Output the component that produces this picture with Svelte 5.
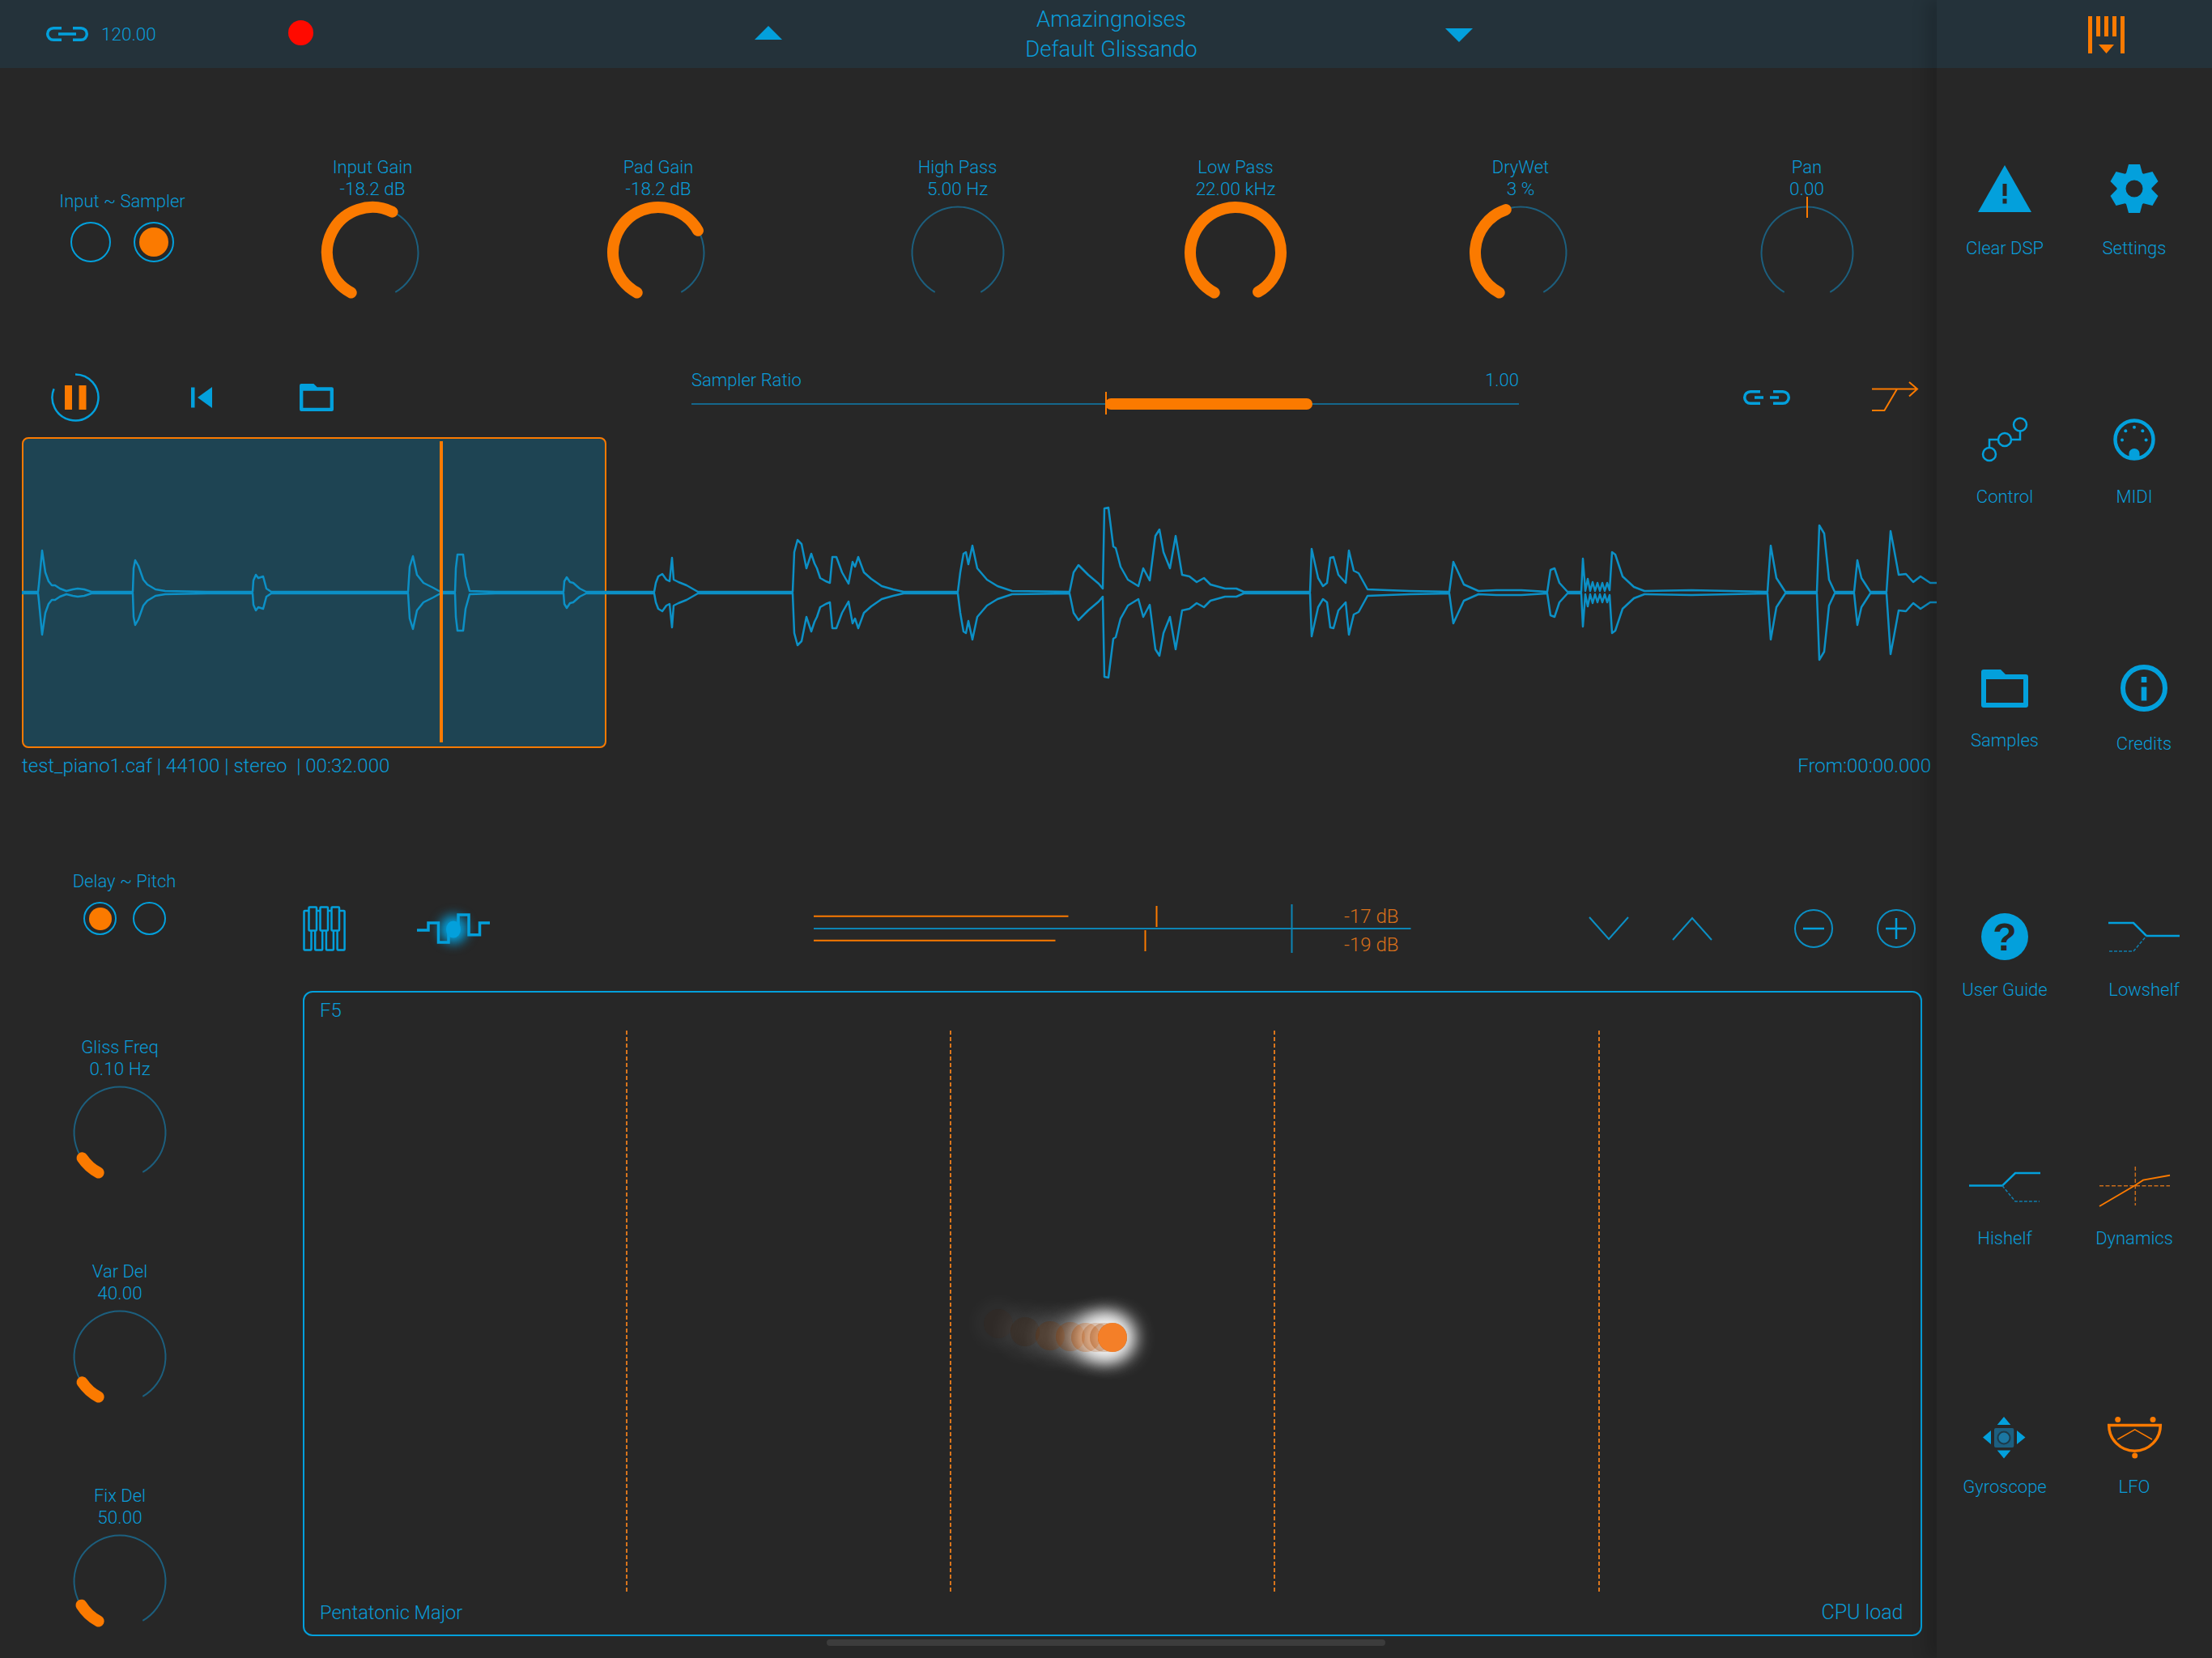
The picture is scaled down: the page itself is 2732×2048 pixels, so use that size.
<script lang="ts">
	const topKnobs = [
		{ label: 'Input Gain', value: '-18.2 dB', end: 26 },
		{ label: 'Pad Gain', value: '-18.2 dB', end: 61 },
		{ label: 'High Pass', value: '5.00 Hz', end: null },
		{ label: 'Low Pass', value: '22.00 kHz', end: 150 },
		{ label: 'DryWet', value: '3 %', end: -19 },
		{ label: 'Pan', value: '0.00', end: null, tick: true }
	];

	const sideKnobs = [
		{ label: 'Gliss Freq', value: '0.10 Hz', end: -124 },
		{ label: 'Var Del', value: '40.00', end: -124 },
		{ label: 'Fix Del', value: '50.00', end: -122 }
	];

	// envelope of the sample, traced by hand: [x, amplitude]
	const wave = [
		[27, 1], [47, 1], [48, 10], [52, 52], [56, 25], [60, 14], [64, 9], [68, 9], [74, 5], [82, 2], [90, 4], [96, 5], [104, 4], [113, 1],
		[164, 1], [165, 30], [167, 40], [171, 33], [177, 16], [182, 10], [192, 4], [204, 2], [261, 1],
		[312, 1], [313, 15], [316, 22], [319, 18], [325, 20], [329, 5], [335, 1],
		[504, 1], [506, 32], [510, 45], [515, 22], [523, 12], [535, 6], [544, 1],
		[562, 1], [563, 30], [565, 47], [572, 47], [575, 20], [580, 2], [612, 1],
		[696, 1], [697, 14], [700, 19], [704, 13], [708, 12], [716, 5], [724, 1],
		[808, 1], [810, 12], [813, 20], [818, 23], [823, 16], [827, 14], [830, 43], [832, 16], [838, 13], [848, 9], [862, 1],
		[979, 1], [981, 50], [985, 65], [990, 60], [996, 30], [1002, 48], [1006, 36], [1009, 30], [1013, 18], [1020, 14], [1025, 12],
		[1028, 44], [1033, 44], [1040, 25], [1048, 11], [1053, 38], [1056, 32], [1060, 44], [1067, 25], [1076, 17], [1089, 8], [1103, 4], [1116, 1],
		[1183, 1], [1186, 25], [1190, 48], [1193, 50], [1196, 35], [1201, 58], [1207, 30], [1219, 16], [1232, 8], [1250, 2], [1321, 1],
		[1326, 25], [1332, 34], [1344, 22], [1357, 11], [1362, 5], [1364, 104], [1369, 105], [1375, 57], [1378, 55], [1384, 32], [1393, 16], [1406, 8],
		[1412, 30], [1420, 15], [1427, 70], [1432, 78], [1437, 50], [1445, 30], [1452, 70], [1460, 22], [1469, 20], [1478, 13], [1487, 18],
		[1495, 10], [1513, 5], [1527, 5], [1536, 1],
		[1618, 1], [1620, 54], [1628, 18], [1634, 8], [1639, 12], [1643, 43], [1647, 44], [1653, 22], [1662, 12], [1666, 52], [1672, 27], [1678, 24], [1689, 4],
		[1714, 3], [1741, 2], [1790, 1],
		[1795, 38], [1808, 10], [1826, 2], [1848, 3], [1879, 3], [1911, 1],
		[1915, 28], [1920, 30], [1926, 12], [1936, 1], [1953, 1], [1955, 42], [1958, 2], [1961, 17], [1964, 2], [1967, 13], [1970, 2], [1973, 12], [1976, 2], [1979, 12], [1982, 2], [1985, 12], [1988, 3],
		[1991, 50], [1995, 47], [2004, 20], [2018, 7], [2031, 2], [2089, 3], [2183, 1],
		[2187, 58], [2194, 18], [2205, 1], [2244, 1],
		[2247, 83], [2253, 73], [2259, 16], [2266, 1], [2290, 1],
		[2294, 40], [2299, 18], [2310, 1], [2330, 1],
		[2335, 76], [2339, 55], [2345, 22], [2354, 23], [2363, 13], [2372, 20], [2384, 12], [2392, 12]
	];
	const waveMid = 192;
	const waveTop = wave.map(([x, a]) => `${x},${waveMid - a}`).join(' ');
	const waveBottom = wave.map(([x, a]) => `${x},${waveMid + a}`).join(' ');

	// ball on the pad with its fading trail, oldest first
	const trail = [
		{ x: 857, y: 409, a: 0.04, glow: 0.04 },
		{ x: 890, y: 419, a: 0.07, glow: 0.07 },
		{ x: 921, y: 424, a: 0.14, glow: 0.11 },
		{ x: 946, y: 425, a: 0.2, glow: 0.16 },
		{ x: 965, y: 426, a: 0.28, glow: 0.3 },
		{ x: 978, y: 426, a: 0.2, glow: 0.5 },
		{ x: 988, y: 426, a: 0.2, glow: 0.7 },
		{ x: 998, y: 426, a: 1, glow: 0.85 }
	];

	function polar(cx: number, cy: number, r: number, deg: number) {
		const rad = (deg * Math.PI) / 180;
		return [cx + r * Math.sin(rad), cy - r * Math.cos(rad)];
	}

	// angles run clockwise from 12 o'clock
	function arc(cx: number, cy: number, r: number, from: number, to: number) {
		const [x0, y0] = polar(cx, cy, r, from);
		const [x1, y1] = polar(cx, cy, r, to);
		const large = to - from > 180 ? 1 : 0;
		return `M${x0.toFixed(2)} ${y0.toFixed(2)}A${r} ${r} 0 ${large} 1 ${x1.toFixed(2)} ${y1.toFixed(2)}`;
	}

	const gearTeeth = [0, 60, 120, 180, 240, 300];
</script>

{#snippet knob(k)}
	<div class="knob">
		<div class="caption">{k.label}</div>
		<div class="caption value">{k.value}</div>
		<svg class="dial" width="140" height="120" viewBox="0 0 140 120">
			<path class="dial-track" d={arc(70, 62, 56.5, -150, 150)} />
			{#if k.end !== null}
				<path class="dial-value" d={arc(70, 62, 56, -152, k.end)} />
			{/if}
			{#if k.tick}
				<line class="dial-tick" x1="70" y1="-7" x2="70" y2="19" />
			{/if}
		</svg>
	</div>
{/snippet}

{#snippet radio(on, size)}
	<span class="radio" class:small={size === 'small'}>
		{#if on}<span class="radio-dot"></span>{/if}
	</span>
{/snippet}

{#snippet folderIcon(w, h)}
	<svg width={w} height={h} viewBox="0 0 58 47">
		<path
			class="fill-blue"
			fill-rule="evenodd"
			d="M0 3a3 3 0 0 1 3-3H24L30 6H55a3 3 0 0 1 3 3V44a3 3 0 0 1-3 3H3a3 3 0 0 1-3-3ZM6 12V41H52V12Z"
		/>
	</svg>
{/snippet}

<div class="app">
	<div class="main">
		<header class="topbar">
			<svg class="bar-link" width="54" height="18" viewBox="0 0 54 18">
				<path class="line-blue thick" d="M20 1.7H10a7.3 7.3 0 0 0 0 14.6H20M34 1.7H44a7.3 7.3 0 0 1 0 14.6H34M16 9H38" />
			</svg>
			<span class="tempo">120.00</span>
			<span class="rec"></span>
			<svg class="preset-up" width="34" height="17" viewBox="0 0 34 17"><path class="fill-blue" d="M17 0L34 17H0Z" /></svg>
			<div class="preset">
				<div>Amazingnoises</div>
				<div>Default Glissando</div>
			</div>
			<svg class="preset-down" width="34" height="17" viewBox="0 0 34 17"><path class="fill-blue" d="M0 0H34L17 17Z" /></svg>
		</header>

		<section class="knob-row">
			<div class="input-select">
				<div class="caption">Input ~ Sampler</div>
				<div class="radios">
					{@render radio(false, 'large')}
					{@render radio(true, 'large')}
				</div>
			</div>
			{#each topKnobs as k}
				{@render knob(k)}
			{/each}
		</section>

		<section class="transport">
			<svg class="pause" width="60" height="60" viewBox="0 0 60 60">
				<path class="line-blue" d={arc(30, 30, 28.5, 0, 292)} />
				<rect class="fill-orange" x="17" y="15" width="9" height="30" />
				<rect class="fill-orange" x="34.5" y="15" width="9" height="30" />
			</svg>
			<svg class="rewind" width="26" height="26" viewBox="0 0 26 26">
				<rect class="fill-blue" x="0" y="0.5" width="4.5" height="25" />
				<path class="fill-blue" d="M8 13L26 0V26Z" />
			</svg>
			<span class="open-file">{@render folderIcon(42, 34)}</span>
			<div class="ratio">
				<div class="ratio-text"><span>Sampler Ratio</span><span>1.00</span></div>
				<div class="ratio-track">
					<span class="ratio-fill"></span>
					<span class="ratio-tick"></span>
				</div>
			</div>
			<svg class="chain" width="60" height="18" viewBox="0 0 60 18">
				<path class="line-blue thick" d="M22 1.7H10a7.3 7.3 0 0 0 0 14.6H22M38 1.7H50a7.3 7.3 0 0 1 0 14.6H38M15 9H26M34 9H45" />
			</svg>
			<svg class="route" width="56" height="36" viewBox="0 0 56 36">
				<path class="line-orange" d="M0 8.6H56M46 0L56 8.6L46 17.5M31 8.6L15.4 35H0" />
			</svg>
		</section>

		<section class="sample">
			<div class="selection"><span class="playhead"></span></div>
			<svg class="wave" width="2392" height="384" viewBox="0 0 2392 384">
				<polyline points={waveTop} />
				<polyline points={waveBottom} />
			</svg>
		</section>

		<div class="sample-info">
			<span>test_piano1.caf | 44100 | stereo&nbsp; | 00:32.000</span>
			<span>From:00:00.000</span>
		</div>

		<section class="lower">
			<aside class="lower-left">
				<div class="delay-select">
					<div class="caption">Delay ~ Pitch</div>
					<div class="radios">
						{@render radio(true, 'small')}
						{@render radio(false, 'small')}
					</div>
				</div>
				{#each sideKnobs as k}
					{@render knob(k)}
				{/each}
			</aside>

			<div class="lower-right">
				<div class="pad-tools">
					<svg class="piano" width="53" height="56" viewBox="0 0 53 56">
						{#each [0, 1, 2, 3] as i}
							<rect class="key" x={1.5 + i * 13.7} y="6" width="9" height="48.5" rx="1" />
						{/each}
						{#each [0, 1, 2] as i}
							<rect class="key" x={7.5 + i * 14} y="1.5" width="9.5" height="29" rx="1" />
						{/each}
					</svg>
					<svg class="gliss" width="90" height="36" viewBox="0 0 90 36">
						<circle class="gliss-glow" cx="45" cy="19" r="17" />
						<path class="line-blue thick" d="M0 20H14V11H26.5V35H39V20H51V1H64V25.7H77.5V11H90" />
						<ellipse class="fill-blue" cx="45" cy="19" rx="9" ry="10.5" />
					</svg>
					<svg class="meter" width="738" height="60" viewBox="0 0 738 60">
						<path class="line-orange" d="M0 14.7H314.5M0 44.7H298.5M423.5 2V28M409.5 32V58" />
						<path class="line-meter" d="M0 30H737.5M590.5 0V60" />
						<text x="722.5" y="22.5" text-anchor="end">-17 dB</text>
						<text x="722.5" y="57.5" text-anchor="end">-19 dB</text>
					</svg>
					<svg class="chevron first" width="48" height="28" viewBox="0 0 48 28"><path class="line-thin" d="M0 0L24 27L48 0" /></svg>
					<svg class="chevron" width="48" height="28" viewBox="0 0 48 28"><path class="line-thin" d="M0 28L24 1L48 28" /></svg>
					<svg class="zoom-out" width="48" height="48" viewBox="0 0 48 48">
						<circle class="line-thin" cx="24" cy="24" r="23" />
						<path class="line-blue" d="M11 24H37" />
					</svg>
					<svg class="zoom-in" width="48" height="48" viewBox="0 0 48 48">
						<circle class="line-thin" cx="24" cy="24" r="23" />
						<path class="line-blue" d="M11 24H37M24 11V37" />
					</svg>
				</div>

				<div class="pad">
					<div>F5</div>
					<div class="pad-foot"><span class="scale-name">Pentatonic Major</span><span>CPU load</span></div>
					{#each [397.5, 797.5, 1197.5, 1598] as x}
						<span class="grid-line" style="left: {x}px"></span>
					{/each}
					{#each trail as t}
						<span class="ball-glow" style="left: {t.x}px; top: {t.y}px; box-shadow: 0 0 22px 11px rgba(255, 255, 255, {t.glow})"></span>
					{/each}
					{#each trail as t}
						<span class="ball" style="left: {t.x}px; top: {t.y}px; opacity: {t.a}"></span>
					{/each}
				</div>
			</div>
		</section>
	</div>

	<nav class="sidebar">
		<div class="sidebar-top">
			<svg width="45" height="46" viewBox="0 0 45 46">
				<path class="fill-orange" d="M0 0H5V46H0ZM10 0H15V25H10ZM20 0H25V25H20ZM30 0H35V25H30ZM40 0H45V46H40ZM13 35H32L22.5 46Z" />
			</svg>
		</div>
		<div class="tools">
			<div class="tool r1">
				<span class="tool-icon">
					<svg width="66" height="58" viewBox="0 0 66 58">
						<path class="fill-blue" d="M33 0L66 58H0Z" />
						<rect class="cut" x="30.5" y="23" width="5" height="15" />
						<rect class="cut" x="30.5" y="41.5" width="5" height="6" />
					</svg>
				</span>
				<span class="tool-label">Clear DSP</span>
			</div>
			<div class="tool r1">
				<span class="tool-icon">
					<svg width="58" height="60" viewBox="-29 -30 58 60">
						<circle class="gear-ring" r="16" />
						{#each gearTeeth as deg}
							<path class="fill-blue" d="M-10 -19L-7 -30H7L10 -19Z" transform="rotate({deg})" />
						{/each}
					</svg>
				</span>
				<span class="tool-label">Settings</span>
			</div>

			<div class="tool r2">
				<span class="tool-icon">
					<svg width="58" height="56" viewBox="0 0 58 56">
						<ellipse class="line-blue" cx="10" cy="46" rx="8" ry="8" />
						<ellipse class="line-blue" cx="29" cy="28" rx="8" ry="8" />
						<ellipse class="line-blue" cx="48" cy="9.5" rx="8" ry="8" />
						<path class="line-blue" d="M10 38V28H21M37 28H48V17.5" />
					</svg>
				</span>
				<span class="tool-label">Control</span>
			</div>
			<div class="tool r2">
				<span class="tool-icon">
					<svg width="52" height="52" viewBox="-26 -26 52 52">
						<circle class="midi-ring" r="23.5" />
						{#each [[-10.7, -10.7], [0, -15.3], [10.3, -10.7], [-15, 0.5], [14.6, 0.5]] as [x, y]}
							<circle class="fill-blue" cx={x} cy={y} r="2" />
						{/each}
						<path class="fill-blue" d="M-6.5 24V17a6.5 6 0 0 1 13 0V24Z" />
					</svg>
				</span>
				<span class="tool-label">MIDI</span>
			</div>

			<div class="tool r3">
				<span class="tool-icon">{@render folderIcon(58, 47)}</span>
				<span class="tool-label">Samples</span>
			</div>
			<div class="tool r3 shift credits">
				<span class="tool-icon">
					<svg width="58" height="58" viewBox="-29 -29 58 58">
						<circle class="info-ring" r="26" />
						<rect class="fill-blue" x="-3.3" y="-14" width="6.6" height="7" />
						<rect class="fill-blue" x="-3.3" y="-1.5" width="6.6" height="17" />
					</svg>
				</span>
				<span class="tool-label">Credits</span>
			</div>

			<div class="tool r4">
				<span class="tool-icon">
					<svg width="58" height="58" viewBox="-29 -29 58 58">
						<circle class="fill-blue" r="29" />
						<text class="help-mark" y="17" text-anchor="middle">?</text>
					</svg>
				</span>
				<span class="tool-label">User Guide</span>
			</div>
			<div class="tool r4 shift">
				<span class="tool-icon">
					<svg width="88" height="37" viewBox="0 0 88 37">
						<path class="line-blue" d="M0 1H31L47 17H88" />
						<path class="line-dash" d="M1 36H31L47 17" />
					</svg>
				</span>
				<span class="tool-label">Lowshelf</span>
			</div>

			<div class="tool r5">
				<span class="tool-icon">
					<svg width="88" height="37" viewBox="0 0 88 37">
						<path class="line-blue" d="M0 16.6H41L57 1H88" />
						<path class="line-dash" d="M41 16.6L57 36H87" />
					</svg>
				</span>
				<span class="tool-label">Hishelf</span>
			</div>
			<div class="tool r5">
				<span class="tool-icon">
					<svg width="87" height="50" viewBox="0 0 87 50">
						<path class="line-orange-dash" d="M44.3 0V48M0 23.7H87" />
						<path class="line-orange" d="M0 49L44.3 23L54 16.6L87 10.7" />
					</svg>
				</span>
				<span class="tool-label">Dynamics</span>
			</div>

			<div class="tool r6">
				<span class="tool-icon">
					<svg width="53" height="52" viewBox="0 0 53 52">
						<path class="fill-blue" d="M26 0L34.3 10H17.7ZM26 51.5L34.3 41.5H17.7ZM0 25.5L10 17V34ZM52.5 25.5L42 17V34Z" />
						<rect class="gyro-pad" x="14" y="14" width="24.3" height="24" rx="2" />
						<circle class="gyro-ball" cx="26" cy="26" r="7.5" />
					</svg>
				</span>
				<span class="tool-label">Gyroscope</span>
			</div>
			<div class="tool r6">
				<span class="tool-icon">
					<svg width="67" height="52" viewBox="0 0 67 52">
						<path class="line-orange heavy" d="M1.7 10.4H65.3A31.8 31.8 0 0 1 1.7 10.4Z" />
						<path class="line-orange slim" d="M12.3 28L33.7 15.8L55 28" />
						<circle class="fill-orange" cx="12.7" cy="3.5" r="3.5" />
						<circle class="fill-orange" cx="56" cy="3.5" r="3.5" />
						<circle class="fill-orange" cx="33.7" cy="48" r="3.5" />
					</svg>
				</span>
				<span class="tool-label">LFO</span>
			</div>
		</div>
	</nav>

	<span class="home-bar"></span>
</div>

<style>
	:global(body) {
		margin: 0;
		background: #272727;
	}

	.app {
		position: relative;
		display: flex;
		width: 2732px;
		height: 2048px;
		overflow: hidden;
		background: #272727;
		color: #0a9cd8;
		font-family: Roboto, 'Liberation Sans', sans-serif;
		font-weight: 300;
		font-size: 24px;
		line-height: 30px;
	}

	svg {
		display: block;
		overflow: visible;
	}

	.fill-blue {
		fill: #03a0dc;
	}

	.fill-orange {
		fill: #fb7a00;
	}

	.line-blue {
		fill: none;
		stroke: #03a0dc;
		stroke-width: 2.5;
	}

	.line-blue.thick {
		stroke-width: 3.5;
	}

	.line-thin {
		fill: none;
		stroke: #0b8fc4;
		stroke-width: 2;
	}

	.line-dash {
		fill: none;
		stroke: #0f7fae;
		stroke-width: 1.5;
		stroke-dasharray: 4 2;
	}

	.line-orange {
		fill: none;
		stroke: #fb7a00;
		stroke-width: 2;
	}

	.line-orange.heavy {
		stroke-width: 3.5;
	}

	.line-orange.slim {
		stroke-width: 1.5;
	}

	.line-orange-dash {
		fill: none;
		stroke: #c96c1b;
		stroke-width: 1.5;
		stroke-dasharray: 5 2.5;
	}

	.main {
		width: 2392px;
		flex: none;
	}

	/* top bar */
	.topbar {
		display: flex;
		align-items: center;
		height: 84px;
		padding-left: 56px;
		background: #24323a;
	}

	.tempo {
		flex: none;
		width: 67px;
		margin-left: 15px;
		font-size: 22.5px;
	}

	.rec {
		flex: none;
		width: 31px;
		height: 31px;
		margin: -3px 0 0 164px;
		border-radius: 50%;
		background: #ff0a00;
	}

	.preset-up {
		margin: -3px 0 0 545px;
	}

	.preset {
		box-sizing: border-box;
		width: 819px;
		padding-right: 6px;
		text-align: center;
		font-size: 27.5px;
		line-height: 37px;
	}

	.preset-down {
		margin-top: 3px;
	}

	/* knobs */
	.knob-row {
		display: grid;
		grid-template-columns: 302px 316px 390px 349px 338px 366px 341px;
		padding-top: 110px;
		width: 2392px;
	}

	.knob {
		display: flex;
		flex-direction: column;
		align-items: center;
	}

	.caption {
		font-size: 22px;
		line-height: 26px;
		text-align: center;
		white-space: nowrap;
	}

	.caption.value {
		font-size: 22.5px;
	}

	.dial {
		margin-top: 4px;
	}

	.dial-track {
		fill: none;
		stroke: #1c5f7e;
		stroke-width: 2;
	}

	.dial-value {
		fill: none;
		stroke: #fb7a00;
		stroke-width: 14;
		stroke-linecap: round;
	}

	.dial-tick {
		stroke: #fb7a00;
		stroke-width: 2;
	}

	.input-select {
		padding-top: 42px;
	}

	.radios {
		display: flex;
		justify-content: center;
		gap: 28px;
		margin-top: 12px;
	}

	.radio {
		box-sizing: border-box;
		display: flex;
		align-items: center;
		justify-content: center;
		width: 50px;
		height: 50px;
		border: 2.5px solid #03a0dc;
		border-radius: 50%;
	}

	.radio-dot {
		width: 36px;
		height: 36px;
		border-radius: 50%;
		background: #fb7a00;
	}

	.radio.small {
		width: 41px;
		height: 41px;
	}

	.radio.small .radio-dot {
		width: 28px;
		height: 28px;
	}

	/* transport row */
	.transport {
		display: flex;
		align-items: center;
		height: 72px;
		margin-top: 85px;
		padding-left: 63px;
	}

	.rewind {
		margin-left: 113px;
	}

	.open-file {
		margin-left: 108px;
	}

	.ratio {
		align-self: stretch;
		width: 1022px;
		margin-left: 442px;
	}

	.ratio-text {
		display: flex;
		justify-content: space-between;
		font-size: 22px;
	}

	.ratio-track {
		position: relative;
		height: 2px;
		margin-top: 13px;
		background: #15678c;
	}

	.ratio-fill {
		position: absolute;
		left: 511px;
		top: -6px;
		width: 256px;
		height: 14px;
		border-radius: 7px;
		background: #fb7a00;
	}

	.ratio-tick {
		position: absolute;
		left: 511px;
		top: -14px;
		width: 1.5px;
		height: 28px;
		background: #fb7a00;
	}

	.chain {
		margin-left: 276px;
	}

	.route {
		margin: -2px 0 0 100px;
	}

	/* waveform */
	.sample {
		position: relative;
		height: 384px;
		margin-top: 13px;
	}

	.selection {
		position: absolute;
		left: 27px;
		top: 0;
		box-sizing: border-box;
		width: 722px;
		height: 384px;
		border: 2.5px solid #fb7a00;
		border-radius: 8px;
		background: #1e4453;
	}

	.playhead {
		position: absolute;
		left: 514px;
		top: 3px;
		z-index: 1;
		width: 3.5px;
		height: 372px;
		background: #fb7a00;
	}

	.wave {
		position: relative;
	}

	.wave polyline {
		fill: none;
		stroke: #0c90c6;
		stroke-width: 2.5;
		stroke-linejoin: round;
	}

	.sample-info {
		display: flex;
		justify-content: space-between;
		margin-top: 7px;
		padding: 0 7px 0 27px;
	}

	/* lower part */
	.lower {
		display: flex;
		margin-top: 114px;
	}

	.lower-left {
		width: 296px;
		flex: none;
	}

	.delay-select .caption {
		margin: 1px 0 0 11px;
	}

	.delay-select .radios {
		gap: 20px;
		margin: 12px 0 0 12px;
	}

	.lower-left .knob {
		margin-top: 101px;
	}

	.delay-select + .knob {
		margin-top: 126px;
	}

	.lower-right {
		margin-left: 77.5px;
		width: 2000px;
	}

	.pad-tools {
		display: flex;
		align-items: center;
		height: 144px;
	}

	.piano .key {
		fill: #272727;
		stroke: #03a0dc;
		stroke-width: 2.5;
	}

	.gliss {
		margin-left: 88.5px;
	}

	.gliss-glow {
		fill: #03a0dc;
		filter: blur(7px);
	}

	.meter {
		margin-left: 399.5px;
	}

	.line-meter {
		fill: none;
		stroke: #0d85b5;
		stroke-width: 2;
	}

	.meter text {
		fill: #d9701a;
		font-size: 24px;
	}

	.chevron {
		margin-left: 55px;
	}

	.chevron.first {
		margin-left: 220px;
	}

	.zoom-out {
		margin-left: 102px;
	}

	.zoom-in {
		margin-left: 54px;
	}

	.pad {
		position: relative;
		box-sizing: border-box;
		display: flex;
		flex-direction: column;
		justify-content: space-between;
		height: 797px;
		margin-top: 5px;
		padding: 7px 21px 12px 19.5px;
		border: 2.5px solid #03a0dc;
		border-radius: 12px;
	}

	.pad-foot {
		display: flex;
		justify-content: space-between;
		font-size: 25px;
	}

	.scale-name {
		font-size: 23.6px;
	}

	.grid-line {
		position: absolute;
		top: 47px;
		width: 2px;
		height: 696px;
		background: repeating-linear-gradient(#d9751c 0 5px, transparent 5px 8px);
	}

	.ball-glow,
	.ball {
		position: absolute;
		width: 36px;
		height: 36px;
		margin: -18px 0 0 -18px;
		border-radius: 50%;
	}

	.ball {
		background: #f47f28;
	}

	/* sidebar */
	.sidebar {
		position: relative;
		z-index: 2;
		flex: 1;
		background: #272727;
		box-shadow: -12px 0 18px rgba(0, 0, 0, 0.16);
	}

	.sidebar-top {
		display: flex;
		align-items: center;
		height: 84px;
		padding-left: 187px;
		background: #24323a;
	}

	.sidebar-top svg {
		margin-top: 2px;
	}

	.tools {
		display: grid;
		grid-template-columns: 168px 152px;
		grid-template-rows: 310px 307px 307px 309px 310px 307px;
		justify-items: center;
		padding-top: 114px;
	}

	.tool {
		display: flex;
		flex-direction: column;
		align-items: center;
	}

	.tool.shift {
		margin-left: 24px;
	}

	.tool-icon {
		display: flex;
		align-items: center;
		justify-content: center;
		height: 70px;
	}

	.tool-label {
		font-size: 22px;
		white-space: nowrap;
	}

	.r1 .tool-label {
		margin-top: 24px;
	}

	.r2 .tool-label {
		margin-top: 21px;
	}

	.r3 .tool-label {
		margin-top: 15px;
	}

	.r3.credits .tool-label {
		margin-top: 19px;
	}

	.r4 .tool-label {
		margin-top: 16px;
	}

	.r5 .tool-label {
		margin-top: 14px;
	}

	.r6 .tool-label {
		margin-top: 11px;
	}

	.cut {
		fill: #272727;
	}

	.gear-ring {
		fill: none;
		stroke: #03a0dc;
		stroke-width: 11;
	}

	.midi-ring {
		fill: none;
		stroke: #03a0dc;
		stroke-width: 4.5;
	}

	.info-ring {
		fill: none;
		stroke: #03a0dc;
		stroke-width: 6;
	}

	.help-mark {
		fill: #272727;
		font-family: 'Liberation Sans', sans-serif;
		font-weight: 700;
		font-size: 48px;
	}

	.gyro-pad {
		fill: #1c5f80;
	}

	.gyro-ball {
		fill: #1b77a3;
		stroke: #1d3a49;
		stroke-width: 2;
	}

	.home-bar {
		position: absolute;
		left: 1021px;
		top: 2025px;
		z-index: 3;
		width: 690px;
		height: 8px;
		border-radius: 4px;
		background: #3c3c3c;
	}
</style>
